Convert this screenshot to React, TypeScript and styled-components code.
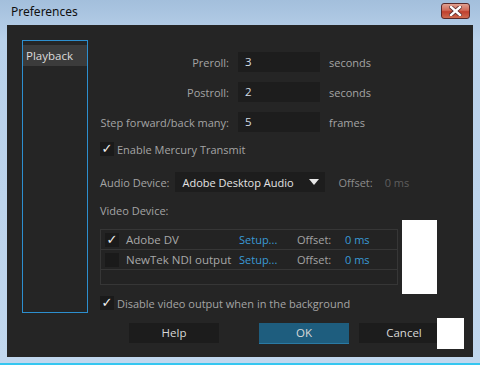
import styled, { createGlobalStyle } from "styled-components";

const GlobalStyle = createGlobalStyle`
  html, body {
    margin: 0;
    padding: 0;
    background: #bcd3ea;
  }
  body {
    font-family: "Open Sans", "Noto Sans", sans-serif;
  }
`;

const Frame = styled.div`
  width: 480px;
  height: 365px;
  box-sizing: border-box;
  display: flex;
  flex-direction: column;
  background: linear-gradient(#a3bfdc 0px, #b9d1ea 40px, #c1d7ee 100%);
  border-bottom: 2px solid #35c6f0;
  padding: 0 7px 6px 7px;
  position: relative;
`;

const TitleBar = styled.div`
  height: 25px;
  display: flex;
  align-items: center;
  justify-content: space-between;
`;

const Title = styled.span`
  font-family: "Noto Sans", "Open Sans", sans-serif;
  font-size: 12px;
  color: #101010;
  padding-left: 4px;
  margin-top: -2px;
`;

const CloseButton = styled.div`
  width: 29px;
  height: 16px;
  box-sizing: border-box;
  margin-right: 3px;
  margin-top: -3px;
  border: 1px solid #5a2a2a;
  border-radius: 3px;
  background: linear-gradient(#e0a090 0%, #d06a58 45%, #c0402e 55%, #cc6a50 100%);
  display: flex;
  align-items: center;
  justify-content: center;
`;

const Body = styled.div`
  flex: 1;
  background: #252525;
  display: flex;
  flex-direction: column;
  padding: 15px 0 0 15px;
  box-sizing: border-box;
`;

const Main = styled.div`
  display: flex;
  gap: 12px;
`;

const Sidebar = styled.div`
  width: 66px;
  height: 273px;
  box-sizing: border-box;
  border: 1px solid #2d8fcf;
  padding-top: 4px;
`;

const SideItem = styled.div`
  height: 21px;
  background: #3b3b3b;
  color: #dcdcdc;
  font-size: 11.5px;
  line-height: 21px;
  padding-left: 3px;
`;

const Content = styled.div`
  display: flex;
  flex-direction: column;
  padding-top: 12px;
  width: 340px;
`;

const FieldGrid = styled.div`
  display: grid;
  grid-template-columns: 129px 82px auto;
  column-gap: 9px;
  row-gap: 10px;
  align-items: center;
`;

const Label = styled.span<{ $right?: boolean }>`
  font-size: 11px;
  color: #a4a4a4;
  text-align: ${(p) => (p.$right ? "right" : "left")};
  white-space: nowrap;
`;

const Field = styled.div`
  height: 20px;
  background: #1d1d1d;
  color: #d4dce4;
  font-size: 11.5px;
  line-height: 20px;
  padding-left: 7px;
`;

const CheckRow = styled.div<{ $top: number }>`
  display: flex;
  align-items: center;
  gap: 3px;
  margin-top: ${(p) => p.$top}px;
  height: 14px;
`;

const Box = styled.div`
  width: 14px;
  height: 14px;
  background: #1a1a1a;
  color: #f0f0f0;
  font-size: 13px;
  line-height: 14px;
  text-align: center;
  font-family: "DejaVu Sans", sans-serif;
  flex-shrink: 0;
`;

const AudioRow = styled.div`
  display: flex;
  align-items: center;
  margin-top: 16px;
  height: 20px;
  white-space: nowrap;
`;

const Select = styled.div`
  width: 150px;
  height: 20px;
  box-sizing: border-box;
  margin-left: 6px;
  background: #1d1d1d;
  color: #e4e4e4;
  font-size: 11px;
  display: flex;
  align-items: center;
  justify-content: space-between;
  padding: 0 6px 0 7px;
`;

const Arrow = styled.span`
  width: 0;
  height: 0;
  border-left: 5px solid transparent;
  border-right: 5px solid transparent;
  border-top: 6px solid #e8e8e8;
`;

const DimText = styled.span<{ $gap: number; $color: string }>`
  font-size: 11px;
  color: ${(p) => p.$color};
  margin-left: ${(p) => p.$gap}px;
`;

const VideoLabel = styled(Label)`
  margin-top: 11px;
  line-height: 16px;
`;

const DeviceList = styled.div`
  margin-top: 10px;
  width: 298px;
  height: 56px;
  box-sizing: border-box;
  border: 1px solid #363636;
  background: #232323;
`;

const DeviceRow = styled.div`
  height: 20px;
  box-sizing: border-box;
  border-bottom: 1px solid #363636;
  display: grid;
  grid-template-columns: 21px 113px 58px 48px auto;
  align-items: center;
  padding-left: 4px;
  font-size: 11px;
`;

const DeviceName = styled.span`
  color: #a8a8a8;
  font-size: 11.5px;
`;

const Link = styled.span`
  color: #3a9ad6;
`;

const Blue = styled.span`
  color: #3a9ad6;
`;

const Buttons = styled.div`
  display: flex;
  margin-top: 10px;
  padding-left: 107px;
`;

const Button = styled.div<{ $primary?: boolean; $gap?: number }>`
  width: 90px;
  height: 20px;
  margin-left: ${(p) => p.$gap ?? 0}px;
  background: ${(p) => (p.$primary ? "#1e5d7e" : "#1c1c1c")};
  border-bottom: ${(p) => (p.$primary ? "1px solid #2a7aa4" : "none")};
  color: #d8d8d8;
  font-size: 11.5px;
  line-height: 20px;
  text-align: center;
`;

const WhitePatch = styled.div<{ $x: number; $y: number; $w: number; $h: number }>`
  position: absolute;
  left: ${(p) => p.$x}px;
  top: ${(p) => p.$y}px;
  width: ${(p) => p.$w}px;
  height: ${(p) => p.$h}px;
  background: #ffffff;
`;

const devices = [
  { name: "Adobe DV", checked: true },
  { name: "NewTek NDI output", checked: false },
];

export default function App() {
  return (
    <Frame>
      <GlobalStyle />
      <TitleBar>
        <Title>Preferences</Title>
        <CloseButton>
          <svg width="13" height="10" viewBox="0 0 13 10">
            <path
              d="M2 1 L11 9 M11 1 L2 9"
              stroke="#5a2a2a"
              strokeWidth="4"
              strokeLinecap="square"
            />
            <path
              d="M2 1 L11 9 M11 1 L2 9"
              stroke="#ffffff"
              strokeWidth="2.4"
              strokeLinecap="square"
            />
          </svg>
        </CloseButton>
      </TitleBar>
      <Body>
        <Main>
          <Sidebar>
            <SideItem>Playback</SideItem>
          </Sidebar>
          <Content>
            <FieldGrid>
              <Label $right>Preroll:</Label>
              <Field>3</Field>
              <Label>seconds</Label>
              <Label $right>Postroll:</Label>
              <Field>2</Field>
              <Label>seconds</Label>
              <Label $right>Step forward/back many:</Label>
              <Field>5</Field>
              <Label>frames</Label>
            </FieldGrid>
            <CheckRow $top={10}>
              <Box>✓</Box>
              <Label>Enable Mercury Transmit</Label>
            </CheckRow>
            <AudioRow>
              <Label>Audio Device:</Label>
              <Select>
                Adobe Desktop Audio
                <Arrow />
              </Select>
              <DimText $gap={13} $color="#8c8c8c">Offset:</DimText>
              <DimText $gap={12} $color="#5e5e5e">0 ms</DimText>
            </AudioRow>
            <VideoLabel>Video Device:</VideoLabel>
            <DeviceList>
              {devices.map((d) => (
                <DeviceRow key={d.name}>
                  <Box>{d.checked ? "✓" : ""}</Box>
                  <DeviceName>{d.name}</DeviceName>
                  <Link>Setup...</Link>
                  <Label>Offset:</Label>
                  <Blue>0 ms</Blue>
                </DeviceRow>
              ))}
            </DeviceList>
            <CheckRow $top={11}>
              <Box>✓</Box>
              <Label>Disable video output when in the background</Label>
            </CheckRow>
          </Content>
        </Main>
        <Buttons>
          <Button>Help</Button>
          <Button $primary $gap={40}>OK</Button>
          <Button $gap={10}>Cancel</Button>
        </Buttons>
      </Body>
      <WhitePatch $x={402} $y={220} $w={35} $h={74} />
      <WhitePatch $x={437} $y={318} $w={27} $h={31} />
    </Frame>
  );
}
